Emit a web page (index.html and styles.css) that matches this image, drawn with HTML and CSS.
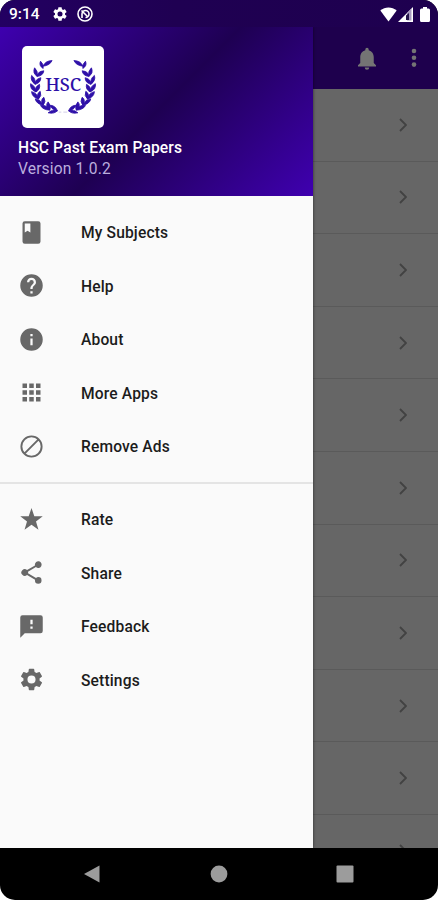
FILE: index.html
```html
<!DOCTYPE html>
<html lang="en">
<head>
<meta charset="utf-8">
<title>HSC Past Exam Papers</title>
<link rel="stylesheet" href="styles.css">
</head>
<body>
<div class="phone">
  <header class="status">
    <span class="time">9:14</span>
    <svg class="gear" viewBox="2 2 20 20"><path d="M19.14 12.94c.04-.3.06-.61.06-.94s-.02-.64-.07-.94l2.03-1.58a.49.49 0 0 0 .12-.61l-1.92-3.32a.49.49 0 0 0-.59-.22l-2.39.96a7 7 0 0 0-1.62-.94l-.36-2.54a.48.48 0 0 0-.48-.41h-3.84a.47.47 0 0 0-.47.41l-.36 2.54c-.59.24-1.13.57-1.62.94l-2.39-.96a.48.48 0 0 0-.59.22L2.74 8.87a.47.47 0 0 0 .12.61l2.03 1.58a7 7 0 0 0 0 1.88l-2.03 1.58a.49.49 0 0 0-.12.61l1.92 3.32c.12.22.37.29.59.22l2.39-.96c.5.38 1.03.7 1.62.94l.36 2.54c.05.24.24.41.48.41h3.84c.24 0 .44-.17.47-.41l.36-2.54a6.800 6.800 0 0 0 1.62-.94l2.39.96c.22.08.47 0 .59-.22l1.92-3.32a.47.47 0 0 0-.12-.61zM12 15.600A3.600 3.600 0 1 1 12 8.400a3.600 3.600 0 0 1 0 7.200z"/></svg>
    <svg class="sync" viewBox="0 0 16 16"><circle cx="8" cy="8" r="7" class="ring"/><path class="ring" d="M5 12V8a3.500 3.500 0 1 1 3.500 3.500M4.500 4.500l6.500 6.500"/></svg>
    <span class="space"></span>
    <svg class="wifi" viewBox="0 0 17 15"><path d="M.3 3.600C5-.7 12-.7 16.700 3.600L8.500 14.500z"/></svg>
    <svg class="signal" viewBox="0 0 15 15"><path class="signal-base" d="M0 15L15 0v15z"/><path class="signal-gap" d="M9 6l4.500-4.500v12H9z"/><path class="signal-x" d="M8 8.500l3-2.500v7H8z"/></svg>
    <svg class="battery" viewBox="0 0 10 15"><path d="M3 0h4v1.500h1.500Q10 1.500 10 3v10.500Q10 15 8.500 15h-7Q0 15 0 13.500V3Q0 1.500 1.500 1.500H3z"/></svg>
  </header>

  <div class="screen">
    <aside class="drawer">
      <div class="banner">
        <svg class="logo" viewBox="20 18 248 246">
          <defs>
            <g id="branch">
              <path d="M84 85Q70 76 76 63Q86 71 84 85zM84 78Q90 62 111 61Q104 76 84 78z"/>
              <path d="M66 109Q51 99 58 83Q69 93 66 109zM66 109Q66 94 86 92Q84 107 66 109z"/>
              <path d="M60 133Q44 122 49 106Q62 115 60 133zM60 133Q59 117 77 113Q77 128 60 133z"/>
              <path d="M62 156Q43 148 46 131Q61 138 62 156zM62 156Q57 141 73 133Q76 149 62 156z"/>
              <path d="M70 177Q50 172 49 155Q66 159 70 177zM70 177Q62 162 75 154Q81 168 70 177z"/>
              <path d="M84 196Q63 192 60 177Q77 178 84 196zM84 196Q74 180 86 172Q94 185 84 196z"/>
              <path d="M104 211Q83 210 76 197Q94 194 104 211zM104 211Q88 197 99 186Q110 198 104 211z"/>
              <path d="M127 213Q118 223 99 219Q110 207 127 213zM127 213Q107 208 106 196Q122 198 127 213z"/>
            </g>
          </defs>
          <use class="leaves" href="#branch"/>
          <use class="leaves" href="#branch" transform="translate(288 0) scale(-1 1)"/>
          <path class="dash" d="M131 217h8M145 217h12"/>
          <text x="144.500" y="152" text-anchor="middle" textLength="109" lengthAdjust="spacingAndGlyphs">HSC</text>
        </svg>
        <div class="title">HSC Past Exam Papers</div>
        <div class="version">Version 1.0.2</div>
      </div>
      <nav>
        <ul class="menu">
          <li><svg viewBox="0 0 24 24"><path d="M18 2H6a2 2 0 0 0-2 2v16a2 2 0 0 0 2 2h12a2 2 0 0 0 2-2V4a2 2 0 0 0-2-2zM6 4h5v8l-2.500-1.500L6 12z"/></svg><span>My Subjects</span></li>
          <li><svg viewBox="0 0 24 24"><path d="M12 2a10 10 0 1 0 0 20 10 10 0 0 0 0-20zm1 17h-2v-2h2zm2.070-7.750l-.9.920C13.450 12.900 13 13.500 13 15h-2v-.5c0-1.100.45-2.100 1.170-2.830l1.240-1.260c.37-.36.59-.86.59-1.410a2 2 0 0 0-4 0H8a4 4 0 0 1 8 0c0 .88-.36 1.680-.93 2.250z"/></svg><span>Help</span></li>
          <li><svg viewBox="0 0 24 24"><path d="M12 2a10 10 0 1 0 0 20 10 10 0 0 0 0-20zm1 15h-2v-6h2zm0-8h-2V7h2z"/></svg><span>About</span></li>
          <li><svg viewBox="0 0 24 24"><path d="M4 8h4V4H4zm6 12h4v-4h-4zm-6 0h4v-4H4zm0-6h4v-4H4zm6 0h4v-4h-4zm6-10v4h4V4zm-6 4h4V4h-4zm6 6h4v-4h-4zm0 6h4v-4h-4z"/></svg><span>More Apps</span></li>
          <li><svg viewBox="0 0 24 24"><path class="line" d="M21 12a9 9 0 1 1-18 0 9 9 0 0 1 18 0zM5.700 18.300L18.300 5.700"/></svg><span>Remove Ads</span></li>
        </ul>
        <ul class="menu">
          <li><svg viewBox="0 0 24 24"><path d="M12 1.800l2.500 7.300 7.500.1-6 4.600 2.200 7.300L12 16.700l-6.200 4.400L8 13.800 2 9.200l7.500-.1z"/></svg><span>Rate</span></li>
          <li><svg viewBox="0 0 24 24"><path d="M18 16.080c-.76 0-1.440.3-1.960.77L8.910 12.700c.05-.23.09-.46.09-.7s-.04-.47-.09-.7l7.050-4.110A3 3 0 1 0 15 5c0 .24.04.47.09.7L8.040 9.810A3 3 0 1 0 8.040 14.190l7.120 4.160c-.05.21-.08.43-.08.65a2.920 2.920 0 1 0 2.920-2.920z"/></svg><span>Share</span></li>
          <li><svg viewBox="0 0 24 24"><path d="M20 2H4a2 2 0 0 0-1.990 2L2 22l4-4h14a2 2 0 0 0 2-2V4a2 2 0 0 0-2-2zm-7 12h-2v-2h2zm0-4h-2V6h2z"/></svg><span>Feedback</span></li>
          <li><svg viewBox="0 0 24 24"><path d="M19.140 12.940c.04-.3.06-.61.06-.94s-.02-.64-.07-.94l2.030-1.580a.49.49 0 0 0 .12-.61l-1.920-3.320a.49.49 0 0 0-.59-.22l-2.390.96a7 7 0 0 0-1.620-.94l-.36-2.540a.48.48 0 0 0-.48-.41h-3.840a.47.47 0 0 0-.47.41l-.36 2.540c-.59.24-1.130.57-1.620.94l-2.390-.96a.48.48 0 0 0-.59.22L2.740 8.870a.47.47 0 0 0 .12.61l2.030 1.580a7 7 0 0 0 0 1.880l-2.030 1.580a.49.49 0 0 0-.12.61l1.920 3.320c.12.22.37.29.59.22l2.390-.96c.5.38 1.030.7 1.620.94l.36 2.540c.05.24.24.41.48.41h3.840c.24 0 .44-.17.47-.41l.36-2.540a6.800 6.800 0 0 0 1.620-.94l2.390.96c.22.08.47 0 .59-.22l1.920-3.320a.47.47 0 0 0-.12-.61zM12 15.600A3.600 3.600 0 1 1 12 8.400a3.600 3.600 0 0 1 0 7.200z"/></svg><span>Settings</span></li>
        </ul>
      </nav>
    </aside>
    <main class="content">
      <div class="toolbar">
        <svg class="bell" viewBox="4 2 16 20"><path d="M12 22a2 2 0 0 0 2-2h-4a2 2 0 0 0 2 2zm6-6v-5c0-3.070-1.630-5.640-4.500-6.320V4a1.500 1.500 0 0 0-3 0v.68C7.640 5.360 6 7.920 6 11v5l-2 2v1h16v-1z"/></svg>
        <svg class="more" viewBox="0 0 6 20"><circle cx="3" cy="3" r="2.300"/><circle cx="3" cy="9.800" r="2.300"/><circle cx="3" cy="16.600" r="2.300"/></svg>
      </div>
      <div class="rows">
        <div class="row"><svg viewBox="0 0 8 14"><path d="M1 1l6 6-6 6"/></svg></div>
        <div class="row"><svg viewBox="0 0 8 14"><path d="M1 1l6 6-6 6"/></svg></div>
        <div class="row"><svg viewBox="0 0 8 14"><path d="M1 1l6 6-6 6"/></svg></div>
        <div class="row"><svg viewBox="0 0 8 14"><path d="M1 1l6 6-6 6"/></svg></div>
        <div class="row"><svg viewBox="0 0 8 14"><path d="M1 1l6 6-6 6"/></svg></div>
        <div class="row"><svg viewBox="0 0 8 14"><path d="M1 1l6 6-6 6"/></svg></div>
        <div class="row"><svg viewBox="0 0 8 14"><path d="M1 1l6 6-6 6"/></svg></div>
        <div class="row"><svg viewBox="0 0 8 14"><path d="M1 1l6 6-6 6"/></svg></div>
        <div class="row"><svg viewBox="0 0 8 14"><path d="M1 1l6 6-6 6"/></svg></div>
        <div class="row"><svg viewBox="0 0 8 14"><path d="M1 1l6 6-6 6"/></svg></div>
        <div class="row"><svg viewBox="0 0 8 14"><path d="M1 1l6 6-6 6"/></svg></div>
      </div>
    </main>
  </div>

  <footer class="navbar">
    <svg viewBox="0 0 18 18"><path d="M1 9L16.500.5v17z"/></svg>
    <svg viewBox="0 0 18 18"><circle cx="9" cy="9" r="8.400"/></svg>
    <svg viewBox="0 0 18 18"><rect x=".5" y=".5" width="17" height="17" rx="1"/></svg>
  </footer>
</div>
</body>
</html>
```
FILE: styles.css
```css
* { box-sizing: border-box; }

body {
  margin: 0;
  background: #fff;
  font-family: Roboto, "Liberation Sans", sans-serif;
}

svg { display: block; flex: none; }

.phone {
  display: flex;
  flex-direction: column;
  width: 438px;
  height: 900px;
  overflow: hidden;
  border-radius: 15px;
  background: #000;
}

.status {
  display: flex;
  align-items: center;
  flex: none;
  height: 27px;
  padding: 1px 8px 0 9px;
  background: linear-gradient(90deg, #230062 0%, #1f0052 40%, #1e004f 100%);
  color: #fff;
  fill: #fff;
}

.time { width: 44px; font-size: 15.5px; font-weight: 500; }
.gear { width: 14px; height: 14px; }
.sync { width: 16px; height: 16px; margin-left: 10px; }
.ring { fill: none; stroke: #fff; stroke-width: 1.6; }
.space { flex: 1; }
.wifi { width: 17px; height: 15px; }
.signal { width: 15px; height: 15px; margin-left: 1px; }
.signal-base { fill: #fff; }
.signal-gap { fill: #a99cc0; }
.signal-x { fill: #24144a; }
.battery { width: 10px; height: 15px; margin-left: 7px; }

.screen { display: flex; flex: none; height: 821px; overflow: hidden; }

.drawer {
  z-index: 1;
  flex: none;
  width: 313px;
  background: #fafafa;
  box-shadow: 0 0 3px rgba(0, 0, 0, .55);
}

.banner {
  height: 169px;
  padding: 19px 18px 0;
  background: linear-gradient(135deg, #3e00af 0%, #1e0052 50%, #3f00b0 100%);
  color: #fff;
}

.logo {
  width: 82px;
  height: 82px;
  margin-left: 4px;
  border-radius: 5px;
  background: #fff;
  fill: #2e10a8;
}

.leaves { stroke: #2e10a8; stroke-width: 2.5; }
.logo text { font: 500 56px "Noto Serif", "DejaVu Serif", serif; }
.dash { stroke: #bdb5df; stroke-width: 2; }

.title { margin-top: 10px; font-size: 15.6px; font-weight: 500; line-height: 21px; letter-spacing: .14px; }
.version { font-size: 15.6px; line-height: 21px; letter-spacing: .15px; color: #bbaede; }

.menu { margin: 0; padding: 9.5px 0 8.5px; list-style: none; }
.menu + .menu { padding-top: 9px; border-top: 2px solid #e4e4e4; }

.menu li {
  display: flex;
  align-items: center;
  gap: 36px;
  height: 53.5px;
  padding-left: 18px;
  color: #1c1c1c;
  font-size: 15.6px;
  font-weight: 500;
  letter-spacing: .14px;
}

.menu span { padding-top: 2px; }
.menu svg { width: 27px; height: 27px; fill: #686868; }
.menu .line { fill: none; stroke: #686868; stroke-width: 1.7; }

.content { display: flex; flex: 1; flex-direction: column; background: #666; }

.toolbar {
  display: flex;
  align-items: center;
  justify-content: flex-end;
  gap: 35px;
  flex: none;
  height: 62px;
  padding-right: 21.5px;
  background: #1e004d;
  fill: #747474;
}

.bell { width: 18px; height: 23px; }
.more { width: 6px; height: 20px; }

.rows { flex: 1; overflow: hidden; }

.row {
  display: flex;
  align-items: center;
  justify-content: flex-end;
  height: 72.6px;
  padding-right: 31.5px;
  border-bottom: 1px solid #5a5a5a;
}

.row svg { width: 8px; height: 14px; fill: none; stroke: #424242; stroke-width: 1.8; }

.navbar {
  display: flex;
  align-items: center;
  justify-content: space-between;
  flex: 1;
  padding: 0 84px 0 83px;
  fill: #9c9c9c;
}

.navbar svg { width: 18px; height: 18px; }
```
